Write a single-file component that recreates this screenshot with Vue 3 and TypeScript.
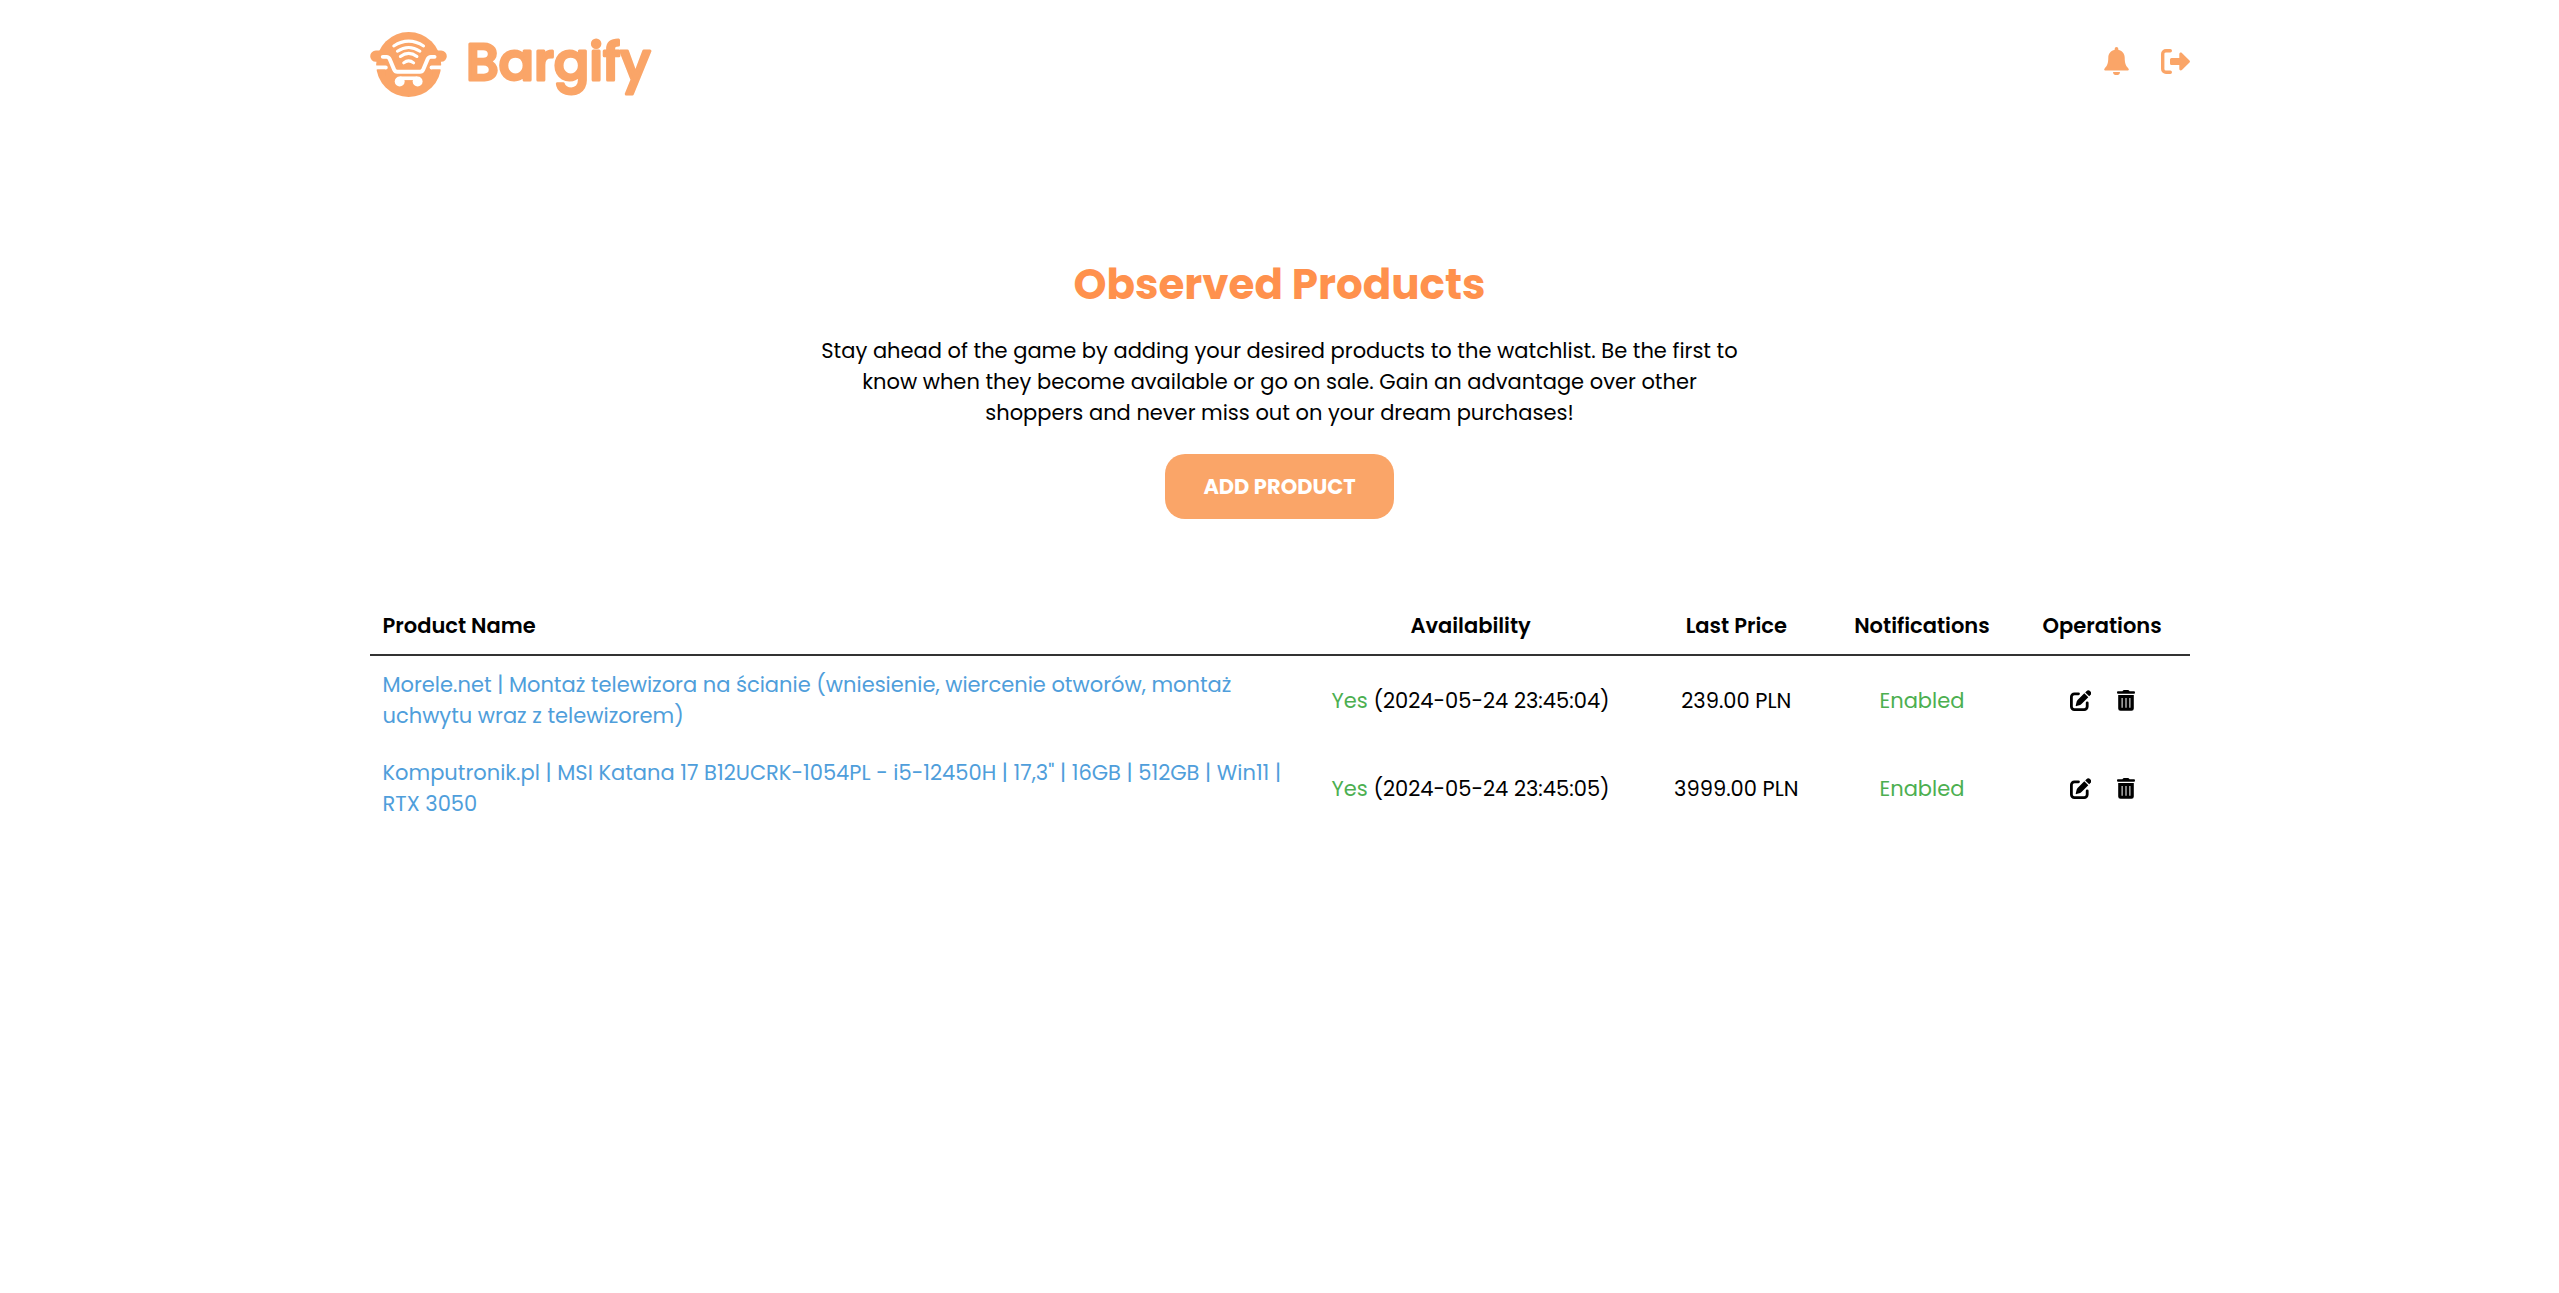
<script setup lang="ts">
interface Product {
  name: string
  available: boolean
  checkedAt: string
  price: string
  notifications: boolean
}

const products: Product[] = [
  {
    name: 'Morele.net | Montaż telewizora na ścianie (wniesienie, wiercenie otworów, montaż uchwytu wraz z telewizorem)',
    available: true,
    checkedAt: '2024-05-24 23:45:04',
    price: '239.00 PLN',
    notifications: true,
  },
  {
    name: 'Komputronik.pl | MSI Katana 17 B12UCRK-1054PL - i5-12450H | 17,3" | 16GB | 512GB | Win11 | RTX 3050',
    available: true,
    checkedAt: '2024-05-24 23:45:05',
    price: '3999.00 PLN',
    notifications: true,
  },
]
</script>

<template>
  <div class="page">
    <header class="topbar">
      <a class="brand" href="#">
        <svg class="brand-mark" viewBox="15 20 231 196" aria-hidden="true">
          <circle cx="131" cy="118" r="98" fill="currentColor" />
          <path fill="currentColor" d="M55 76H32a17 17 0 0 0 0 34h5q0 11 12 11h164q12 0 12-11h4a17 17 0 0 0 0-34h-23z" />
          <path fill="#fff" d="M12 121h50a6 6 0 0 1 0 12H12zM250 121h-50a6 6 0 0 0 0 12h50z" />
          <path fill="currentColor" d="M36 133h24v20H41zM226 133h-24v20h19z" />
          <g fill="none" stroke="#fff" stroke-linecap="round" stroke-linejoin="round">
            <path stroke-width="12" d="M53 95h11q7 0 10 7l13 31q3 7 10 7h68q7 0 10-7l13-31q3-7 10-7h11" />
            <path stroke-width="9" d="M86 62q45-29 90 0M97 78q34-23 68 0M106 94q25-19 50 0M116 113q15-12 30 0" />
          </g>
          <path fill="#fff" d="M104 154h53v11h-53z" />
          <circle cx="104" cy="169" r="15" fill="#fff" />
          <circle cx="158" cy="169" r="15" fill="#fff" />
        </svg>
        <svg class="brand-name" viewBox="0 0 192 65">
          <text x="0" y="48">Bargify</text>
        </svg>
      </a>
      <nav class="actions">
        <button type="button" class="icon-button" aria-label="Notifications">
          <svg class="bell" viewBox="0 0 25 28" aria-hidden="true">
            <path fill="currentColor" d="M12.500 0a1.800 1.800 0 0 0-1.800 1.800v1C7 3.600 4.300 6.700 4.300 10.500c0 6-1.300 8.500-3.500 10.700C-.4 22.500.4 23.500 1.600 23.500h21.800c1.200 0 2-1 .8-2.300-2.200-2.200-3.500-4.700-3.500-10.700 0-3.800-2.700-6.900-6.400-7.700v-1A1.800 1.800 0 0 0 12.500 0zM9 24.900a3.500 3.300 0 0 0 7 0z" />
          </svg>
        </button>
        <button type="button" class="icon-button" aria-label="Log out">
          <svg class="logout" viewBox="0 0 29 25" aria-hidden="true">
            <path fill="none" stroke="currentColor" stroke-width="3.400" stroke-linecap="round" d="M9.300 1.700H5a3.300 3.300 0 0 0-3.300 3.300v15A3.300 3.300 0 0 0 5 23.300h4.300" />
            <path fill="currentColor" d="M10.500 9h7.800V5.200c0-1.500 1.600-2.100 2.600-1.100l7.600 7.500q.9.900 0 1.800l-7.600 7.500c-1 1-2.600.4-2.600-1.100V16h-7.800Q9 16 9 14.500v-4Q9 9 10.500 9z" />
          </svg>
        </button>
      </nav>
    </header>

    <main>
      <section class="intro">
        <h1>Observed Products</h1>
        <p>
          Stay ahead of the game by adding your desired products to the watchlist. Be the first to
          know when they become available or go on sale. Gain an advantage over other
          shoppers and never miss out on your dream purchases!
        </p>
        <button type="button" class="add">ADD PRODUCT</button>
      </section>

      <table class="products">
        <colgroup>
          <col class="col-name" />
          <col class="col-availability" />
          <col class="col-price" />
          <col class="col-notifications" />
          <col class="col-operations" />
        </colgroup>
        <thead>
          <tr>
            <th scope="col">Product Name</th>
            <th scope="col">Availability</th>
            <th scope="col">Last Price</th>
            <th scope="col">Notifications</th>
            <th scope="col">Operations</th>
          </tr>
        </thead>
        <tbody>
          <tr v-for="product in products" :key="product.name">
            <td><a class="product-link" href="#">{{ product.name }}</a></td>
            <td>
              <span class="positive">{{ product.available ? 'Yes' : 'No' }}</span> ({{ product.checkedAt }})
            </td>
            <td>{{ product.price }}</td>
            <td><span class="positive">{{ product.notifications ? 'Enabled' : 'Disabled' }}</span></td>
            <td>
              <div class="operations">
                <button type="button" class="icon-button" aria-label="Edit">
                  <svg class="row-icon" viewBox="0 0 21 21" aria-hidden="true">
                    <path fill="none" stroke="currentColor" stroke-width="2.800" stroke-linecap="round" d="M8.500 3.800H4.400a3 3 0 0 0-3 3v9.800a3 3 0 0 0 3 3h9.800a3 3 0 0 0 3-3v-3.800" />
                    <path fill="currentColor" d="M16.400 1.200a2.800 2.800 0 0 1 4 3.900l-1.200 1.200-4-3.900zM14.300 3.300l4 3.900-6.800 6.800q-.6.600-1.300.9l-3.700 1.200q-.9.200-.8-.7l1-3.800q.3-.9.900-1.500z" />
                  </svg>
                </button>
                <button type="button" class="icon-button" aria-label="Delete">
                  <svg class="row-icon trash" viewBox="0 0 18 21" aria-hidden="true">
                    <path fill="currentColor" d="M5.800.7Q6.200 0 7 0h4q.8 0 1.200.7l.4.600H17q1 0 1 1.200t-1 1.300H1q-1 0-1-1.300t1-1.200h4.400z" />
                    <path fill="currentColor" fill-rule="evenodd" d="M1.200 5h15.600v13.500a2.300 2.300 0 0 1-2.300 2.300h-11a2.300 2.300 0 0 1-2.300-2.300zM4.600 8v9.800h1V8zM8.500 8v9.800h1V8zM12.400 8v9.800h1V8z" />
                  </svg>
                </button>
              </div>
            </td>
          </tr>
        </tbody>
      </table>
    </main>
  </div>
</template>

<style>
body {
  margin: 0;
  background: #fff;
}
</style>

<style scoped>
.page {
  box-sizing: border-box;
  max-width: 1820px;
  margin: 0 auto;
  padding: 32px 0;
  color: #000;
  font-family: Poppins, Inter, "Open Sans", sans-serif;
  font-size: 21px;
  line-height: 31px;
}

button {
  padding: 0;
  border: 0;
  background: none;
  color: inherit;
  font: inherit;
  cursor: pointer;
}

a {
  text-decoration: none;
}

.topbar {
  display: flex;
  justify-content: space-between;
  align-items: flex-start;
  color: #faa568;
}

.brand {
  display: flex;
  align-items: center;
  gap: 19px;
  color: inherit;
}

.brand-mark {
  display: block;
  width: 77px;
  height: 65px;
}

.brand-name {
  display: block;
  width: 192px;
  height: 65px;
  overflow: visible;
  fill: currentColor;
  stroke: currentColor;
  stroke-width: 3px;
  stroke-linejoin: round;
  font-size: 52px;
  font-weight: 500;
}

.actions {
  display: flex;
  align-items: center;
  gap: 32px;
  height: 58px;
}

.icon-button {
  display: block;
}

.icon-button svg {
  display: block;
}

.bell {
  width: 25px;
  height: 28px;
}

.logout {
  width: 29px;
  height: 25px;
}

.intro {
  display: flex;
  flex-direction: column;
  align-items: center;
  margin-top: 158px;
  text-align: center;
}

h1 {
  margin: 0;
  color: #ff914d;
  font-size: 42px;
  font-weight: 700;
  line-height: 60px;
}

.intro p {
  max-width: 928px;
  margin: 20px 0 26px;
}

.add {
  padding: 17px 38px;
  border-radius: 20px;
  background: #faa568;
  color: #fff;
  font-weight: 700;
}

.products {
  width: 100%;
  margin-top: 78px;
  border-collapse: collapse;
  table-layout: fixed;
}

.col-name {
  width: 51%;
}

.col-availability {
  width: 19%;
}

.col-price {
  width: 10.2%;
}

.col-notifications {
  width: 10.2%;
}

.col-operations {
  width: 9.6%;
}

th,
td {
  padding: 13px;
  text-align: center;
  vertical-align: middle;
}

th {
  font-weight: 600;
}

thead tr {
  border-bottom: 2px solid #333;
}

th:first-child,
td:first-child {
  text-align: left;
}

.product-link {
  color: #4f9edb;
}

.positive {
  color: #4caf50;
}

.operations {
  display: flex;
  justify-content: center;
  gap: 26px;
}

.row-icon {
  width: 21px;
  height: 21px;
}

.trash {
  width: 18px;
}
</style>
